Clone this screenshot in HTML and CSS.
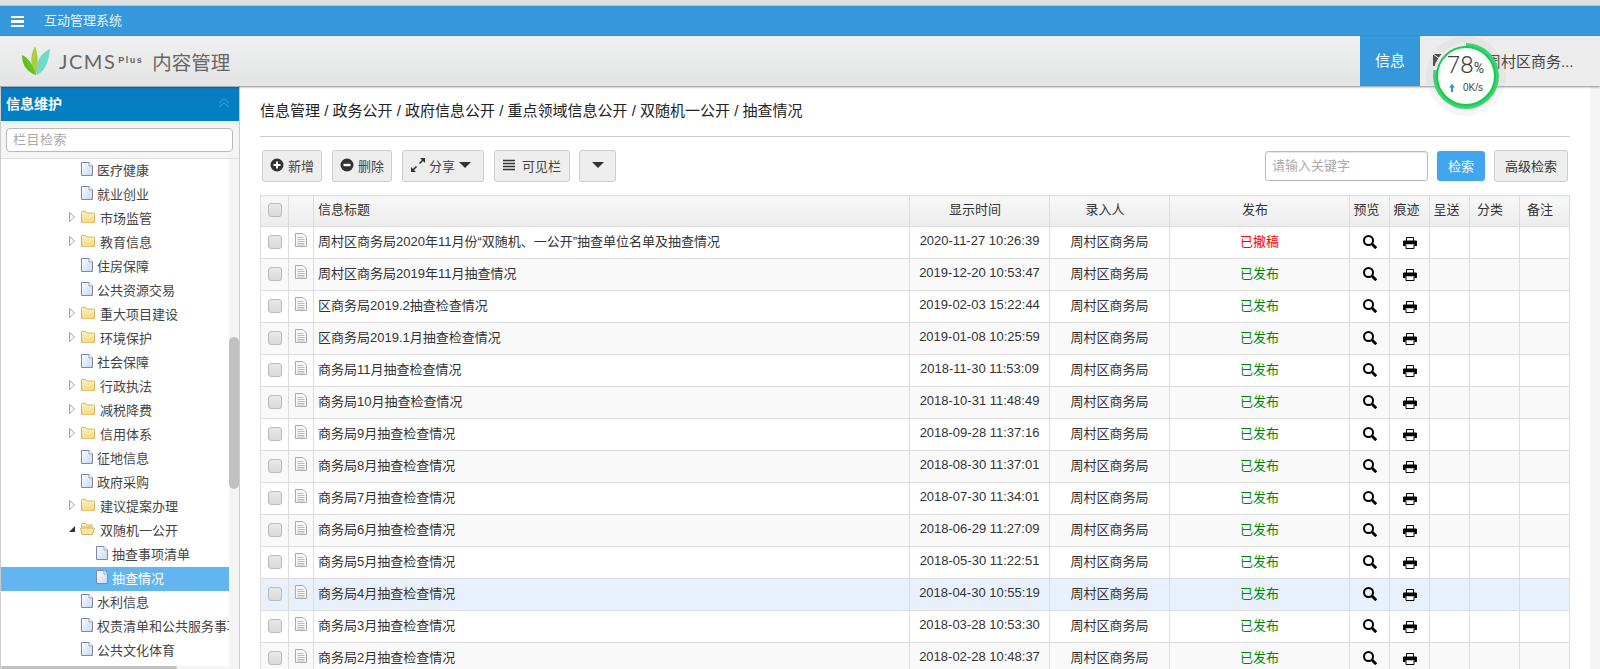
FILE: index.html
```html
<!DOCTYPE html>
<html lang="zh-CN">
<head>
  <meta charset="UTF-8">
  <title>内容管理</title>
  <link rel="stylesheet" href="styles.css">
</head>
<body>
  <svg class="defs" width="0" height="0">
    <symbol id="page" viewBox="0 0 12 14"><defs><linearGradient id="pg" x1="0" y1="0" x2="1" y2="1"><stop offset="0" stop-color="#fff"/><stop offset="1" stop-color="#c4d8f4"/></linearGradient></defs><path d="M.5.5h7.5l3.500 3.500v9.500h-11z" fill="url(#pg)" stroke="#7c86b8"/><path d="M8 .5v3.500h3.500" fill="#fff" stroke="#9aa3c8"/></symbol>
    <symbol id="folder" viewBox="0 0 14 12"><defs><linearGradient id="fd" x1="0" y1="0" x2="0" y2="1"><stop offset="0" stop-color="#fdf3c4"/><stop offset="1" stop-color="#f3d67e"/></linearGradient></defs><path d="M.5 1.500q0-1 1-1h3l1.500 1.500h6.500q1 0 1 1v8q0 1-1 1h-11q-1 0-1-1z" fill="url(#fd)" stroke="#d8b35e"/></symbol>
    <symbol id="folder-open" viewBox="0 0 15 12"><path d="M1.500 3v-1.500q0-1 1-1h3l1.500 1.500h5v2h-10.500z" fill="#fbeebb" stroke="#d8b35e"/><path d="M.5 5h14l-2 6.500h-10.500z" fill="#f9e6a6" stroke="#d8b35e"/></symbol>
    <symbol id="tri" viewBox="0 0 6 10"><path d="M.5.5l5 4.500-5 4.500z" fill="#fff" stroke="#a0a0a0"/></symbol>
    <symbol id="doc" viewBox="0 0 12 14"><path d="M.5.5h7.500l3.500 3.500v9.500h-11z" fill="#f7f7f7" stroke="#aaa"/><path d="M2.500 4.500h6M2.500 6.500h7M2.500 8.500h7M2.500 10.500h7M2.500 12h7" stroke="#bdbdbd"/></symbol>
    <symbol id="zoom" viewBox="0 0 14 14"><circle cx="5.500" cy="5.500" r="4.500" fill="none" stroke="#000" stroke-width="2"/><path d="M8.800 8.800l4.400 4.400" stroke="#000" stroke-width="2.800"/></symbol>
    <symbol id="print" viewBox="0 0 14 12"><path d="M3.500 4v-3.500h7v3.500" fill="#fff" stroke="#000"/><path d="M1 3.500h12q1 0 1 1v4.500h-2.500v-1.500h-9v1.500h-2.500v-4.500q0-1 1-1z" fill="#000"/><path d="M3 7.500v4h8v-4" fill="#fff" stroke="#000"/></symbol>
  </svg>

  <div class="top-band"></div>
  <div class="title-bar">
    <span class="burger"><i></i><i></i><i></i></span>
    <span class="system-name">互动管理系统</span>
  </div>

  <header class="app-header">
    <div class="logo">
      <svg class="leaf" width="28" height="30" viewBox="0 0 28 30">
        <path d="M14 29C5 26 0 19 0 9c6 3 12 10 14 20z" fill="#5fbb1e"/>
        <path d="M14 29C8 21 8 9 13 0c3 8 4 20 1 29z" fill="#a9ce42"/>
        <path d="M14 29C8 25 4 17 2 11c5 3 10 10 12 18z" fill="#6cc41f"/>
        <path d="M15 29c-2-11 3-22 13-26-1 11-4 21-13 26z" fill="#6fdcc8"/>
      </svg>
      <span class="jcms">JCMS<sup>Plus</sup></span>
      <span class="product">内容管理</span>
    </div>
    <nav class="header-right">
      <a class="tab-active"><span>信息</span></a>
      <div class="user-box">
        <svg class="mail" width="16" height="12" viewBox="0 0 16 12"><path d="M0 0h16v12h-16z" fill="#444"/><path d="M0 0l8 6 8-6" fill="none" stroke="#fff"/></svg>
        <svg class="avatar" width="18" height="18" viewBox="0 0 18 18"><circle cx="9" cy="6" r="4" fill="#bbb"/><path d="M1 18c0-9 16-9 16 0z" fill="#bbb"/></svg>
        <span class="user-name">周村区商务...</span>
      </div>
    </nav>
  </header>

  <div class="meter">
    <div class="meter-ring">
      <div class="meter-face">
        <div class="meter-value">78<small>%</small></div>
        <div class="meter-speed">
          <svg width="6" height="8" viewBox="0 0 6 8"><path d="M3 0l3 3.500h-2v4.500h-2v-4.500h-2z" fill="#1e90ff"/></svg>
          <span>0K/s</span>
        </div>
      </div>
    </div>
  </div>

  <div class="workspace">
    <aside class="sidebar">
      <div class="side-head">
        <span>信息维护</span>
        <svg width="12" height="10" viewBox="0 0 12 10"><path d="M1 5l5-4 5 4M1 9l5-4 5 4" fill="none" stroke="#2b9ad6" stroke-width="1.200"/></svg>
      </div>
      <div class="side-search"><input type="text" placeholder="栏目检索"></div>
      <div class="tree-wrap">
        <ul class="tree">
          <li class="node"><svg class="ic-page"><use href="#page"/></svg>医疗健康</li>
          <li class="node"><svg class="ic-page"><use href="#page"/></svg>就业创业</li>
          <li class="node branch"><svg class="ic-tri"><use href="#tri"/></svg><svg class="ic-folder"><use href="#folder"/></svg>市场监管</li>
          <li class="node branch"><svg class="ic-tri"><use href="#tri"/></svg><svg class="ic-folder"><use href="#folder"/></svg>教育信息</li>
          <li class="node"><svg class="ic-page"><use href="#page"/></svg>住房保障</li>
          <li class="node"><svg class="ic-page"><use href="#page"/></svg>公共资源交易</li>
          <li class="node branch"><svg class="ic-tri"><use href="#tri"/></svg><svg class="ic-folder"><use href="#folder"/></svg>重大项目建设</li>
          <li class="node branch"><svg class="ic-tri"><use href="#tri"/></svg><svg class="ic-folder"><use href="#folder"/></svg>环境保护</li>
          <li class="node"><svg class="ic-page"><use href="#page"/></svg>社会保障</li>
          <li class="node branch"><svg class="ic-tri"><use href="#tri"/></svg><svg class="ic-folder"><use href="#folder"/></svg>行政执法</li>
          <li class="node branch"><svg class="ic-tri"><use href="#tri"/></svg><svg class="ic-folder"><use href="#folder"/></svg>减税降费</li>
          <li class="node branch"><svg class="ic-tri"><use href="#tri"/></svg><svg class="ic-folder"><use href="#folder"/></svg>信用体系</li>
          <li class="node"><svg class="ic-page"><use href="#page"/></svg>征地信息</li>
          <li class="node"><svg class="ic-page"><use href="#page"/></svg>政府采购</li>
          <li class="node branch"><svg class="ic-tri"><use href="#tri"/></svg><svg class="ic-folder"><use href="#folder"/></svg>建议提案办理</li>
          <li class="node branch"><b class="arrow-open"></b><svg class="ic-folder open"><use href="#folder-open"/></svg>双随机一公开</li>
          <li class="node child"><svg class="ic-page"><use href="#page"/></svg>抽查事项清单</li>
          <li class="node child selected"><svg class="ic-page"><use href="#page"/></svg>抽查情况</li>
          <li class="node"><svg class="ic-page"><use href="#page"/></svg>水利信息</li>
          <li class="node"><svg class="ic-page"><use href="#page"/></svg>权责清单和公共服务事项</li>
          <li class="node"><svg class="ic-page"><use href="#page"/></svg>公共文化体育</li>
        </ul>
        <div class="scroll-v"><span></span></div>
        <div class="scroll-h"><span></span></div>
      </div>
    </aside>

    <main class="content">
      <div class="crumbs">信息管理 / 政务公开 / 政府信息公开 / 重点领域信息公开 / 双随机一公开 / 抽查情况</div>

      <div class="toolbar">
        <div class="tool-left">
          <button class="btn btn-new"><svg width="14" height="14" viewBox="0 0 14 14"><circle cx="7" cy="7" r="6.500" fill="#333"/><path d="M7 3.500v7M3.500 7h7" stroke="#fff" stroke-width="2"/></svg>新增</button>
          <button class="btn btn-del"><svg width="14" height="14" viewBox="0 0 14 14"><circle cx="7" cy="7" r="6.500" fill="#333"/><path d="M3.500 7h7" stroke="#fff" stroke-width="2.400"/></svg>删除</button>
          <button class="btn btn-share"><svg width="14" height="14" viewBox="0 0 14 14"><path d="M1 13l4.500-4.500M13 1l-4.500 4.500" stroke="#333" stroke-width="1.600"/><path d="M0 14v-5l5 5zM14 0v5l-5-5z" fill="#333"/></svg>分享<i class="caret"></i></button>
          <button class="btn btn-cols"><svg width="12" height="12" viewBox="0 0 12 12"><path d="M0 1.500h12M0 4.500h12M0 7.500h12M0 10.500h12" stroke="#333" stroke-width="1.600"/></svg>可见栏</button>
          <button class="btn btn-more"><i class="caret"></i></button>
        </div>
        <div class="tool-right">
          <input class="keyword" type="text" placeholder="请输入关键字">
          <button class="btn-search">检索</button>
          <button class="btn btn-adv">高级检索</button>
        </div>
      </div>

      <table class="grid">
        <colgroup>
          <col class="c-check"><col class="c-doc"><col class="c-title"><col class="c-time"><col class="c-user"><col class="c-state">
          <col class="c-mini"><col class="c-mini"><col class="c-mini"><col class="c-wide"><col class="c-wide">
        </colgroup>
        <thead>
          <tr>
            <th><span class="check"></span></th><th></th><th class="left">信息标题</th><th class="pad">显示时间</th><th class="pad">录入人</th><th class="pad">发布</th>
            <th class="pad-s">预览</th><th class="pad-s">痕迹</th><th class="pad-s">呈送</th><th class="pad">分类</th><th class="pad">备注</th>
          </tr>
        </thead>
        <tbody>
          <tr><td><span class="check"></span></td><td><svg class="ic-doc"><use href="#doc"/></svg></td><td class="left">周村区商务局2020年11月份“双随机、一公开”抽查单位名单及抽查情况</td><td>2020-11-27 10:26:39</td><td>周村区商务局</td><td class="revoked">已撤稿</td><td><svg class="ic-zoom"><use href="#zoom"/></svg></td><td><svg class="ic-print"><use href="#print"/></svg></td><td></td><td></td><td></td></tr>
          <tr><td><span class="check"></span></td><td><svg class="ic-doc"><use href="#doc"/></svg></td><td class="left">周村区商务局2019年11月抽查情况</td><td>2019-12-20 10:53:47</td><td>周村区商务局</td><td class="published">已发布</td><td><svg class="ic-zoom"><use href="#zoom"/></svg></td><td><svg class="ic-print"><use href="#print"/></svg></td><td></td><td></td><td></td></tr>
          <tr><td><span class="check"></span></td><td><svg class="ic-doc"><use href="#doc"/></svg></td><td class="left">区商务局2019.2抽查检查情况</td><td>2019-02-03 15:22:44</td><td>周村区商务局</td><td class="published">已发布</td><td><svg class="ic-zoom"><use href="#zoom"/></svg></td><td><svg class="ic-print"><use href="#print"/></svg></td><td></td><td></td><td></td></tr>
          <tr><td><span class="check"></span></td><td><svg class="ic-doc"><use href="#doc"/></svg></td><td class="left">区商务局2019.1月抽查检查情况</td><td>2019-01-08 10:25:59</td><td>周村区商务局</td><td class="published">已发布</td><td><svg class="ic-zoom"><use href="#zoom"/></svg></td><td><svg class="ic-print"><use href="#print"/></svg></td><td></td><td></td><td></td></tr>
          <tr><td><span class="check"></span></td><td><svg class="ic-doc"><use href="#doc"/></svg></td><td class="left">商务局11月抽查检查情况</td><td>2018-11-30 11:53:09</td><td>周村区商务局</td><td class="published">已发布</td><td><svg class="ic-zoom"><use href="#zoom"/></svg></td><td><svg class="ic-print"><use href="#print"/></svg></td><td></td><td></td><td></td></tr>
          <tr><td><span class="check"></span></td><td><svg class="ic-doc"><use href="#doc"/></svg></td><td class="left">商务局10月抽查检查情况</td><td>2018-10-31 11:48:49</td><td>周村区商务局</td><td class="published">已发布</td><td><svg class="ic-zoom"><use href="#zoom"/></svg></td><td><svg class="ic-print"><use href="#print"/></svg></td><td></td><td></td><td></td></tr>
          <tr><td><span class="check"></span></td><td><svg class="ic-doc"><use href="#doc"/></svg></td><td class="left">商务局9月抽查检查情况</td><td>2018-09-28 11:37:16</td><td>周村区商务局</td><td class="published">已发布</td><td><svg class="ic-zoom"><use href="#zoom"/></svg></td><td><svg class="ic-print"><use href="#print"/></svg></td><td></td><td></td><td></td></tr>
          <tr><td><span class="check"></span></td><td><svg class="ic-doc"><use href="#doc"/></svg></td><td class="left">商务局8月抽查检查情况</td><td>2018-08-30 11:37:01</td><td>周村区商务局</td><td class="published">已发布</td><td><svg class="ic-zoom"><use href="#zoom"/></svg></td><td><svg class="ic-print"><use href="#print"/></svg></td><td></td><td></td><td></td></tr>
          <tr><td><span class="check"></span></td><td><svg class="ic-doc"><use href="#doc"/></svg></td><td class="left">商务局7月抽查检查情况</td><td>2018-07-30 11:34:01</td><td>周村区商务局</td><td class="published">已发布</td><td><svg class="ic-zoom"><use href="#zoom"/></svg></td><td><svg class="ic-print"><use href="#print"/></svg></td><td></td><td></td><td></td></tr>
          <tr><td><span class="check"></span></td><td><svg class="ic-doc"><use href="#doc"/></svg></td><td class="left">商务局6月抽查检查情况</td><td>2018-06-29 11:27:09</td><td>周村区商务局</td><td class="published">已发布</td><td><svg class="ic-zoom"><use href="#zoom"/></svg></td><td><svg class="ic-print"><use href="#print"/></svg></td><td></td><td></td><td></td></tr>
          <tr><td><span class="check"></span></td><td><svg class="ic-doc"><use href="#doc"/></svg></td><td class="left">商务局5月抽查检查情况</td><td>2018-05-30 11:22:51</td><td>周村区商务局</td><td class="published">已发布</td><td><svg class="ic-zoom"><use href="#zoom"/></svg></td><td><svg class="ic-print"><use href="#print"/></svg></td><td></td><td></td><td></td></tr>
          <tr class="hovered"><td><span class="check"></span></td><td><svg class="ic-doc"><use href="#doc"/></svg></td><td class="left">商务局4月抽查检查情况</td><td>2018-04-30 10:55:19</td><td>周村区商务局</td><td class="published">已发布</td><td><svg class="ic-zoom"><use href="#zoom"/></svg></td><td><svg class="ic-print"><use href="#print"/></svg></td><td></td><td></td><td></td></tr>
          <tr><td><span class="check"></span></td><td><svg class="ic-doc"><use href="#doc"/></svg></td><td class="left">商务局3月抽查检查情况</td><td>2018-03-28 10:53:30</td><td>周村区商务局</td><td class="published">已发布</td><td><svg class="ic-zoom"><use href="#zoom"/></svg></td><td><svg class="ic-print"><use href="#print"/></svg></td><td></td><td></td><td></td></tr>
          <tr><td><span class="check"></span></td><td><svg class="ic-doc"><use href="#doc"/></svg></td><td class="left">商务局2月抽查检查情况</td><td>2018-02-28 10:48:37</td><td>周村区商务局</td><td class="published">已发布</td><td><svg class="ic-zoom"><use href="#zoom"/></svg></td><td><svg class="ic-print"><use href="#print"/></svg></td><td></td><td></td><td></td></tr>
        </tbody>
      </table>
    </main>
    <div class="page-scroll"></div>
  </div>
</body>
</html>
```

FILE: styles.css
```css
* {
  box-sizing: border-box;
}

html, body {
  margin: 0;
  height: 100%;
  overflow: hidden;
}

body {
  display: flex;
  flex-direction: column;
  position: relative;
  background: #fff;
  color: #333;
  font-family: "Liberation Sans", "Noto Sans CJK SC", sans-serif;
  font-size: 13px;
}

.defs {
  position: absolute;
}

.top-band {
  height: 6px;
  flex: none;
  background: #e1e1e1;
  border-bottom: 1px solid #b9c4cc;
}

.title-bar {
  height: 30px;
  flex: none;
  display: flex;
  align-items: center;
  background: #3498db;
  color: #fff;
  padding-left: 11px;
}

.burger {
  width: 13px;
  display: flex;
  flex-direction: column;
  gap: 2px;
  margin-top: 1px;
}

.burger i {
  height: 2.500px;
  background: #fff;
}

.system-name {
  margin-left: 20px;
  padding-bottom: 3px;
  font-size: 13px;
  color: #e8f4fc;
}

/* logo row */
.app-header {
  height: 50px;
  flex: none;
  display: flex;
  justify-content: space-between;
  background: linear-gradient(#f0f0f0, #e3e4e5);
  box-shadow: 0 1px 2px rgba(0, 0, 0, 0.45);
  position: relative;
  z-index: 2;
}

.logo {
  display: flex;
  align-items: center;
  padding-left: 22px;
  color: #666;
}

.leaf {
  flex: none;
}

.jcms {
  margin-left: 9px;
  font-family: Lato, "Liberation Sans", sans-serif;
  font-size: 20px;
  letter-spacing: 1.500px;
  color: #666;
}

.jcms sup {
  font-family: "Liberation Sans", sans-serif;
  font-size: 9px;
  font-weight: bold;
  letter-spacing: 1.500px;
  vertical-align: 6px;
  line-height: 0;
  margin-left: 2px;
}

.product {
  margin-left: 9px;
  font-size: 19.500px;
}

.header-right {
  display: flex;
  width: 240px;
}

.tab-active {
  width: 60px;
  display: flex;
  align-items: center;
  justify-content: center;
  padding-bottom: 4px;
  background: #3498db;
  color: #fff;
  font-size: 15px;
}

.user-box {
  flex: 1;
  display: flex;
  align-items: center;
  padding: 0 0 2px 13px;
  background: #ececec;
  color: #444;
  font-size: 15px;
  white-space: nowrap;
}

.avatar {
  margin-left: 19px;
  flex: none;
}

/* floating meter over the header */
.meter {
  position: absolute;
  left: 1426px;
  top: 36px;
  width: 80px;
  height: 80px;
  padding: 7px;
  border-radius: 50%;
  background: rgba(180, 180, 180, 0.12);
  z-index: 5;
}

.meter-ring {
  width: 66px;
  height: 66px;
  padding: 3px;
  border-radius: 50%;
  background: conic-gradient(#36d66c 0 78%, #ececec 78% 100%);
}

.meter-face {
  height: 100%;
  border: 2.500px solid #20c45a;
  border-radius: 50%;
  background: radial-gradient(circle at 50% 50%, #fff 55%, #dcf5e2 100%);
  color: #444;
  padding: 3px 0 0 9px;
}

.meter-value {
  font-family: Roboto, "Liberation Sans", sans-serif;
  font-weight: 300;
  font-size: 24px;
  line-height: 28px;
}

.meter-value small {
  font-size: 14px;
  font-weight: 400;
}

.meter-speed {
  display: flex;
  align-items: center;
  gap: 8px;
  font-size: 10px;
  line-height: 12px;
  padding-left: 2px;
}

/* sidebar + content */
.workspace {
  flex: 1;
  display: flex;
  min-height: 0;
}

.sidebar {
  width: 240px;
  flex: none;
  display: flex;
  flex-direction: column;
  border-left: 1px solid #ccc;
  border-right: 1px solid #ccc;
  background: #f5f5f5;
  padding-top: 1px;
}

.side-head {
  height: 34px;
  flex: none;
  display: flex;
  align-items: center;
  justify-content: space-between;
  padding: 0 9px 2px 5px;
  background: linear-gradient(#0a7cc0, #0080c4);
  color: #fff;
  font-size: 14px;
  font-weight: bold;
}

.side-search {
  height: 38px;
  flex: none;
  padding: 7px 6px 0 5px;
  background: #f4f4f4;
  border-bottom: 1px solid #ddd;
}

.side-search input {
  display: block;
  width: 100%;
  height: 24px;
  border: 1px solid #bbb;
  border-radius: 4px;
  padding: 0 6px 2px;
  font: 13px "Liberation Sans", "Noto Sans CJK SC", sans-serif;
  letter-spacing: 0.500px;
  background: #fff;
}

input::placeholder {
  color: #aaa;
}

.tree-wrap {
  flex: 1;
  min-height: 0;
  position: relative;
  overflow: hidden;
}

.tree {
  list-style: none;
  margin: 0;
  padding: 0;
  width: 228px;
  background: #fff;
  height: 100%;
  overflow: hidden;
}

.node {
  height: 24px;
  display: flex;
  align-items: center;
  padding: 0 0 4px 80px;
  font-size: 13px;
  color: #444;
  white-space: nowrap;
}

.ic-page {
  width: 12px;
  height: 14px;
  margin-right: 4px;
  flex: none;
}

.branch {
  padding-left: 68px;
}

.ic-tri {
  width: 6px;
  height: 10px;
  margin-right: 6px;
  flex: none;
}

.arrow-open {
  width: 0;
  height: 0;
  margin-right: 5px;
  border-style: solid;
  border-width: 0 0 6px 6px;
  border-color: transparent transparent #333 transparent;
  flex: none;
}

.ic-folder {
  width: 14px;
  height: 12px;
  margin-right: 5px;
  flex: none;
}

.ic-folder.open {
  width: 15px;
  margin-right: 5px;
}

.child {
  padding-left: 95px;
}

.selected {
  background: #62b5ee;
  color: #fff;
}

.scroll-v {
  position: absolute;
  top: 0;
  right: 0;
  bottom: 0;
  width: 10px;
  background: #f5f5f5;
}

.scroll-v span {
  display: block;
  height: 152px;
  margin-top: 178px;
  background: #c1c1c1;
  border-radius: 5px;
}

.scroll-h {
  position: absolute;
  left: 0;
  bottom: 0;
  width: 228px;
  height: 3px;
  background: #f5f5f5;
}

.scroll-h span {
  display: block;
  width: 176px;
  height: 100%;
  background: #c1c1c1;
  border-radius: 3px;
}

.content {
  flex: 1;
  min-width: 0;
  padding: 0 20px;
}

.page-scroll {
  width: 10px;
  flex: none;
  background: #f5f5f5;
}

.crumbs {
  height: 51px;
  padding-top: 15px;
  line-height: 20px;
  font-size: 15px;
  color: #222;
  border-bottom: 1px solid #ccc;
}

.toolbar {
  display: flex;
  justify-content: space-between;
  margin-top: 13px;
  height: 32px;
}

.tool-left {
  display: flex;
  gap: 10px;
  padding-left: 2px;
}

.tool-right {
  display: flex;
  gap: 9px;
  padding-right: 2px;
}

.btn {
  height: 32px;
  display: flex;
  align-items: center;
  justify-content: center;
  gap: 4px;
  border: 1px solid #ccc;
  border-radius: 3px;
  background: #eee;
  color: #444;
  font: 13px "Liberation Sans", "Noto Sans CJK SC", sans-serif;
  padding: 0 0 2px;
}

.btn-new, .btn-del {
  width: 60px;
}

.btn-share {
  width: 82px;
  gap: 4px;
  padding-right: 4px;
}

.btn-cols {
  width: 76px;
  gap: 7px;
}

.btn-more {
  width: 37px;
  margin-left: -1px;
}

.btn-adv {
  width: 74px;
  color: #333;
}

.caret {
  width: 0;
  height: 0;
  border-style: solid;
  border-width: 6px 6px 0;
  border-color: #333 transparent transparent;
}

.keyword {
  width: 163px;
  height: 30px;
  margin-top: 1px;
  border: 1px solid #bbb;
  border-radius: 3px;
  box-shadow: inset 0 1px 1px rgba(0, 0, 0, 0.1);
  padding: 0 6px 2px;
  font: 13px "Liberation Sans", "Noto Sans CJK SC", sans-serif;
}

.btn-search {
  width: 48px;
  height: 30px;
  margin-top: 1px;
  border: 0;
  border-radius: 3px;
  padding: 0 0 2px;
  background: #42a5f0;
  color: #fff;
  font: 13px "Liberation Sans", "Noto Sans CJK SC", sans-serif;
}

.grid {
  width: 1310px;
  margin-top: 13px;
  table-layout: fixed;
  border-collapse: collapse;
  color: #333;
}

.c-check { width: 28px; }
.c-doc { width: 25px; }
.c-title { width: 596px; }
.c-time { width: 140px; }
.c-user { width: 120px; }
.c-state { width: 180px; }
.c-mini { width: 40px; }
.c-wide { width: 50px; }

.grid th, .grid td {
  padding: 0 0 5px;
  border: 1px solid #ddd;
  text-align: center;
  font-size: 13px;
  font-weight: normal;
  white-space: nowrap;
  overflow: hidden;
}

.grid thead tr {
  height: 31px;
}

.grid th {
  background: linear-gradient(#f8f8f8, #ececec);
}

.grid th.pad {
  padding-right: 9px;
}

.grid th.pad-s {
  padding-right: 6px;
}

.grid tbody tr {
  height: 32px;
}

.grid tbody tr:nth-child(even) {
  background: #f9f9f9;
}

.grid tbody tr.hovered {
  background: #e8f0fb;
}

.grid .left {
  text-align: left;
  padding-left: 4px;
}

.check {
  display: block;
  width: 14px;
  height: 14px;
  margin: 3px auto 0;
  border: 1px solid #bbb;
  border-radius: 3px;
  background: linear-gradient(#e8e8e8, #dadada);
}

.ic-doc {
  display: block;
  width: 12px;
  height: 14px;
  margin: -1px auto 0;
}

.ic-zoom {
  display: block;
  width: 14px;
  height: 14px;
  margin: 3px auto 0;
}

.ic-print {
  display: block;
  width: 14px;
  height: 12px;
  margin: 5px auto 0;
}

.grid .revoked {
  color: #f00;
}

.grid .published {
  color: #080;
}
```
